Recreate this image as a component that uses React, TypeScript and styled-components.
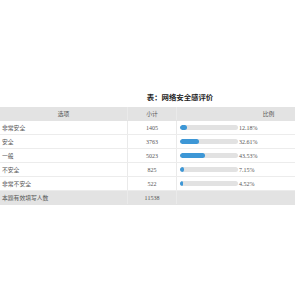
import styled, {createGlobalStyle} from 'styled-components';

const GlobalStyle = createGlobalStyle`
  html, body {
    margin: 0;
    padding: 0;
    background: #ffffff;
    overflow: hidden;
  }
  body {
    font-family: "Liberation Serif", "Noto Sans CJK SC", serif;
  }
`;

const Page = styled.div`
  width: 360px;
  padding-top: 91px;
`;

const Title = styled.div`
  height: 11px;
  line-height: 11px;
  margin-bottom: 5px;
  text-align: center;
  font-size: 7.4px;
  font-weight: bold;
  color: #222;
  font-family: "Noto Sans CJK SC", sans-serif;
`;

const Row = styled.div<{$shade?: boolean}>`
  display: grid;
  grid-template-columns: 128px 49px 183px;
  height: 14px;
  box-sizing: border-box;
  background: ${(p) => (p.$shade ? '#e3e3e3' : '#ffffff')};
  border-bottom: 1px solid ${(p) => (p.$shade ? '#e3e3e3' : '#ececec')};
`;

const Cell = styled.div<{$align?: string}>`
  display: flex;
  align-items: center;
  justify-content: ${(p) => p.$align || 'flex-start'};
  padding: 0 2px;
  font-size: 6px;
  color: #555;
  border-right: 1px solid #eaeaea;
  white-space: nowrap;
  &:last-child {
    border-right: none;
  }
`;

const Label = styled.span`
  font-family: "Noto Sans CJK SC", sans-serif;
  font-size: 5.8px;
`;

const BarWrap = styled.div`
  display: flex;
  align-items: center;
  padding-left: 1px;
`;

const Track = styled.div`
  width: 58px;
  height: 5px;
  border-radius: 3px;
  background: #e2e2e2;
  overflow: hidden;
`;

const Fill = styled.div`
  height: 100%;
  border-radius: 3px;
  background: #3d97d6;
`;

const Pct = styled.span`
  margin-left: 1px;
  font-size: 6px;
  color: #555;
`;

const rows = [
    {name: '非常安全', count: 1405, pct: 12.18},
    {name: '安全', count: 3763, pct: 32.61},
    {name: '一般', count: 5023, pct: 43.53},
    {name: '不安全', count: 825, pct: 7.15},
    {name: '非常不安全', count: 522, pct: 4.52},
];

export default function App() {
    return (
        <>
            <GlobalStyle />
            <Page>
                <Title>表：网络安全感评价</Title>
                <Row $shade>
                    <Cell $align="center"><Label>选项</Label></Cell>
                    <Cell $align="center"><Label>小计</Label></Cell>
                    <Cell $align="center"><Label>比例</Label></Cell>
                </Row>
                {rows.map((r) => (
                    <Row key={r.name}>
                        <Cell><Label>{r.name}</Label></Cell>
                        <Cell $align="center">{r.count}</Cell>
                        <Cell>
                            <BarWrap>
                                <Track>
                                    <Fill style={{width: `${Math.max(r.pct, 6)}%`}} />
                                </Track>
                                <Pct>{r.pct.toFixed(2)}%</Pct>
                            </BarWrap>
                        </Cell>
                    </Row>
                ))}
                <Row $shade>
                    <Cell><Label>本题有效填写人数</Label></Cell>
                    <Cell $align="center">11538</Cell>
                    <Cell />
                </Row>
            </Page>
        </>
    );
}
